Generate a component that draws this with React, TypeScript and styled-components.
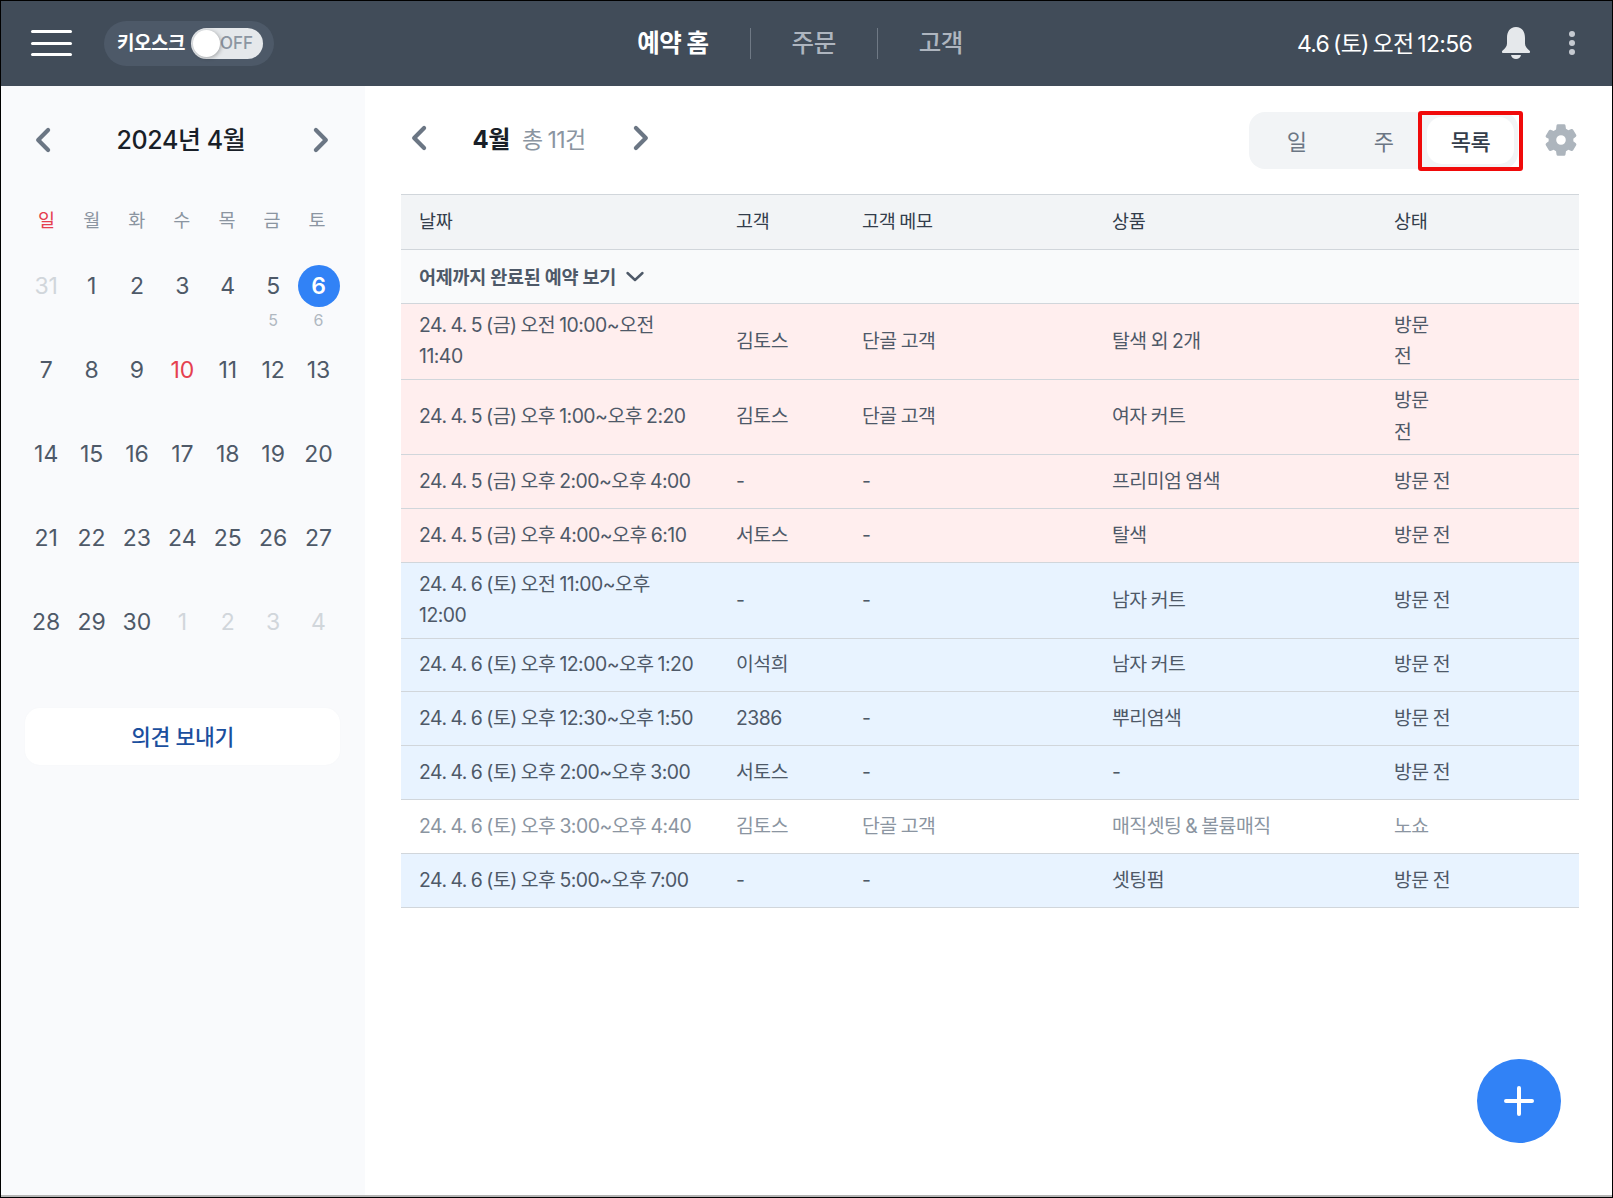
import React from 'react';
import styled, { createGlobalStyle } from 'styled-components';

const Global = createGlobalStyle`
  html, body { margin: 0; padding: 0; background: #fff; }
  body { font-family: Inter, "Noto Sans CJK KR", "Noto Sans", sans-serif; overflow: hidden; }
`;
const Frame = styled.div`
  width: 1613px; height: 1198px; box-sizing: border-box; position: relative; overflow: hidden;
  border-top: 1px solid #000; border-left: 1px solid #000; border-right: 1px solid #000;
  border-bottom: 1px solid #000; display: flex; flex-direction: column; background: #fff;
`;
const BottomEdge = styled.div`height: 2px; flex: none; background: #b5b5b5;`;
const TopBar = styled.header`
  height: 85px; flex: none; background: #414c59; display: grid; grid-template-columns: 1fr auto 1fr; align-items: center;
  padding: 0 36px 1px 30px; box-sizing: border-box; color: #fff;
`;
const BarLeft = styled.div`display: flex; align-items: center; gap: 32px;`;
const Burger = styled.div`
  width: 41px; height: 26px; display: flex; flex-direction: column; justify-content: space-between;
  & > i { display: block; height: 3px; border-radius: 2px; background: #fff; }
`;
const Kiosk = styled.div`
  height: 45px; width: 170px; box-sizing: border-box; border-radius: 23px; background: #4d5968; display: flex; align-items: center; justify-content: space-between; padding: 0 11px 0 13px;
  font-size: 19px; font-weight: 600; letter-spacing: -0.5px;
`;
const KioskLabel = styled.span`padding-bottom: 3px;`;
const Toggle = styled.div`
  width: 72px; height: 31px; border-radius: 16px; background: #e5e8eb; position: relative; color: #8b95a1; font-size: 17px; font-weight: 500; display: flex; align-items: center; justify-content: flex-end; padding-right: 10px; box-sizing: border-box; letter-spacing: 0;
`;
const Knob = styled.span`
  position: absolute; left: 2px; top: 2px; width: 27px; height: 27px; border-radius: 50%; background: #fff; box-shadow: 1px 1px 4px rgba(0,0,0,.3);
`;
const Nav = styled.nav`display: flex; align-items: center; margin-right: 7px;`;
const NavItem = styled.div<{ $active?: boolean }>`
  font-size: 24.5px; font-weight: ${p => p.$active ? 700 : 500}; letter-spacing: -0.5px; color: ${p => p.$active ? '#fff' : '#aeb5bf'};
  padding: 0 41px; height: 31px; line-height: 30px; & + & { border-left: 1px solid #6f7985; }
`;
const BarRight = styled.div`display: flex; align-items: center; justify-content: flex-end; gap: 30px;`;
const Clock = styled.div`font-size: 23px; letter-spacing: -0.7px; word-spacing: -2px; font-weight: 400; padding-bottom: 3px; margin-right: -1px;`;
const DotsBox = styled.div`margin-left: 7px; display: flex;`;
const Body = styled.div`flex: 1; display: flex; min-height: 0;`;
const Side = styled.aside`
  width: 364px; flex: none; background: #f9fafc; padding: 29px 24px 0 24px; box-sizing: border-box; display: flex; flex-direction: column;
`;
const CalHead = styled.div`display: flex; align-items: center; justify-content: space-between; height: 50px; padding: 0 7px 0 5px;`;
const CalTitle = styled.div`font-size: 25px; font-weight: 500; color: #191f28; letter-spacing: -0.4px; margin: 0 2px 4px 0;`;
const Week = styled.div`
  display: grid; grid-template-columns: repeat(7, 45.1px); margin-top: 39px; height: 30px; align-items: center; margin-left: -1px;
`;
const WeekDay = styled.div<{ $red?: boolean }>`
  text-align: center; font-size: 18.5px; color: ${p => p.$red ? '#e5404f' : '#8b95a1'};
`;
const Days = styled.div`
  display: grid; grid-template-columns: repeat(7, 45.4px); grid-auto-rows: 84px; margin-top: 31px; margin-left: -1.5px;
`;
const Day = styled.div`display: flex; flex-direction: column; align-items: center;`;
const DayNum = styled.div<{ $tone?: 'muted' | 'red' | 'sel' }>`
  width: 42px; height: 42px; border-radius: 50%; display: flex; align-items: center; justify-content: center; font-size: 23px;
  color: ${p => p.$tone === 'muted' ? '#d1d6db' : p.$tone === 'red' ? '#e5404f' : p.$tone === 'sel' ? '#fff' : '#4e5968'};
  background: ${p => p.$tone === 'sel' ? '#3182f6' : 'transparent'};
  font-weight: ${p => p.$tone === 'sel' ? 600 : 400};
`;
const DayCount = styled.div`font-size: 16px; color: #b0b8c1; margin-top: 4px; line-height: 19px;`;
const Feedback = styled.button`
  width: 315px; height: 57px; margin-top: 23px; border: 0; border-radius: 15px; background: #fff; color: #1b4f9e; font: 500 21.5px Inter, "Noto Sans CJK KR", sans-serif; letter-spacing: -0.3px; padding: 0 0 3px; box-shadow: 0 0 3px rgba(0,0,0,.02);
`;
const Main = styled.main`flex: 1; min-width: 0; padding: 25px 33px 0 36px; box-sizing: border-box; position: relative;`;
const MainHead = styled.div`display: flex; align-items: center; height: 58px; padding-left: 5px;`;
const MonthGroup = styled.div`display: flex; align-items: center; width: 248px; justify-content: space-between; margin-bottom: 5px;`;
const Month = styled.div`display: flex; align-items: baseline; gap: 12px; margin-left: -2px;`;
const MonthName = styled.span`font-size: 24px; font-weight: 700; color: #191f28; letter-spacing: -0.4px;`;
const MonthTotal = styled.span`font-size: 23px; color: #8b95a1; letter-spacing: -0.6px; word-spacing: -1px;`;
const Right = styled.div`margin-left: auto; display: flex; align-items: center; gap: 25px;`;
const Seg = styled.div`
  height: 57px; box-sizing: border-box; background: #f2f4f6; border-radius: 16px; display: flex; align-items: center; padding: 0 4px;
`;
const SegItem = styled.div`
  width: 87px; height: 47px; display: flex; align-items: center; justify-content: center; font-size: 22px; letter-spacing: -0.5px; color: #6b7684;
`;
const SegActive = styled(SegItem)`
  background: #fff; color: #333d4b; border-radius: 15px; font-weight: 500; position: relative;
  &::after { content: ''; position: absolute; left: -9px; top: -6px; right: -9px; bottom: -7px; border: 4.500px solid #f00a0a; border-radius: 3px; box-sizing: border-box; pointer-events: none; }
`;
const TableWrap = styled.div`margin-top: 25px;`;
const Row = styled.div<{ $tone?: 'red' | 'blue' | 'head' | 'fold' | 'off'; $h: number }>`
  display: grid; grid-template-columns: 317px 126px 250px 282px 1fr; align-items: center; height: ${p => p.$h}px; box-sizing: border-box;
  border-bottom: 1px solid #d1d6db;
  background: ${p => ({ red: '#ffeeee', blue: '#e8f3ff', head: '#f2f4f6', fold: '#f9fafb', off: '#fff' } as Record<string, string>)[p.$tone || 'off']};
  color: ${p => p.$tone === 'off' ? '#8b95a1' : p.$tone === 'head' ? '#333d4b' : '#4e5968'};
  ${p => p.$tone === 'head' ? 'border-top: 1px solid #d1d6db;' : ''}
`;
const Cell = styled.div`padding: 0 19px 0 18px; font-size: 19.4px; line-height: 31.5px; letter-spacing: -0.5px; word-spacing: -1px;`;
const HeadCell = styled(Cell)`font-size: 18.5px; letter-spacing: -0.3px; word-spacing: -1px;`;
const Fold = styled.div`
  grid-column: 1 / -1; padding: 0 0 1px 18px; font-size: 18.5px; font-weight: 600; color: #4e5968; display: flex; align-items: center; gap: 7px; letter-spacing: -0.3px;
`;
const Fab = styled.div`
  position: absolute; right: 51px; bottom: 52px; width: 84px; height: 84px; border-radius: 50%; background: #3182f6; display: flex; align-items: center; justify-content: center;
`;

const Chev = ({ dir, size = 28, w = 3.6, color = '#6b7684' }: { dir: 'l' | 'r' | 'd'; size?: number; w?: number; color?: string }) => (
  <svg width={size} height={size} viewBox="0 0 24 24" fill="none" stroke={color} strokeWidth={w} strokeLinecap="round" strokeLinejoin="round">
    <path d={dir === 'l' ? 'M15.5 3.5 7 12l8.5 8.5' : dir === 'r' ? 'M8.5 3.5 17 12l-8.5 8.5' : 'M4.500 9l7.500 7 7.500-7'} />
  </svg>
);
const Bell = () => (
  <svg width="30" height="34" viewBox="0 0 30 34" fill="#e5e8eb">
    <path d="M15 1C8.6 1 6 6 6 12v5.5c0 2.600-1.800 4.800-4.600 7.200-.9.8-.4 2.300.8 2.300h25.600c1.200 0 1.700-1.500.8-2.300C25.800 22.300 24 20.100 24 17.500V12C24 6 21.400 1 15 1z" />
    <path d="M10 29h10c-.4 2.400-2.600 4-5 4s-4.600-1.600-5-4z" />
  </svg>
);
const Dots = () => (
  <svg width="8" height="26" viewBox="0 0 8 26" fill="#c5cad1"><circle cx="4" cy="4" r="3" /><circle cx="4" cy="13" r="3" /><circle cx="4" cy="22" r="3" /></svg>
);
const Gear = () => (
  <svg width="36" height="36" viewBox="0 0 24 24" fill="#adb5bd" fillRule="evenodd">
    <path d="M10 1.500h4a1 1 0 0 1 1 .9l.3 2.100c.6.3 1.100.6 1.600 1l2-.8a1 1 0 0 1 1.200.4l2 3.400a1 1 0 0 1-.2 1.300l-1.700 1.300a7 7 0 0 1 0 1.800l1.700 1.300a1 1 0 0 1 .2 1.300l-2 3.400a1 1 0 0 1-1.200.4l-2-.8c-.5.4-1 .7-1.600 1l-.3 2.100a1 1 0 0 1-1 .9h-4a1 1 0 0 1-1-.9l-.3-2.100c-.6-.3-1.100-.6-1.600-1l-2 .8a1 1 0 0 1-1.200-.4l-2-3.400a1 1 0 0 1 .2-1.300l1.700-1.300a7 7 0 0 1 0-1.800L2.100 10.300a1 1 0 0 1-.2-1.300l2-3.400a1 1 0 0 1 1.200-.4l2 .8c.5-.4 1-.7 1.600-1L9 2.400a1 1 0 0 1 1-.9zM12 8.800a3.200 3.200 0 1 0 0 6.400 3.200 3.200 0 0 0 0-6.400z" />
  </svg>
);

const weekDays = ['일', '월', '화', '수', '목', '금', '토'];
type D = { n: number; tone?: 'muted' | 'red' | 'sel'; c?: number };
const days: D[] = [
  { n: 31, tone: 'muted' }, { n: 1 }, { n: 2 }, { n: 3 }, { n: 4 }, { n: 5, c: 5 }, { n: 6, tone: 'sel', c: 6 },
  { n: 7 }, { n: 8 }, { n: 9 }, { n: 10, tone: 'red' }, { n: 11 }, { n: 12 }, { n: 13 },
  { n: 14 }, { n: 15 }, { n: 16 }, { n: 17 }, { n: 18 }, { n: 19 }, { n: 20 },
  { n: 21 }, { n: 22 }, { n: 23 }, { n: 24 }, { n: 25 }, { n: 26 }, { n: 27 },
  { n: 28 }, { n: 29 }, { n: 30 }, { n: 1, tone: 'muted' }, { n: 2, tone: 'muted' }, { n: 3, tone: 'muted' }, { n: 4, tone: 'muted' },
];
type R = { tone: 'red' | 'blue' | 'off'; h: number; c: React.ReactNode[] };
const rows: R[] = [
  { tone: 'red', h: 75.6, c: ['24. 4. 5 (금) 오전 10:00~오전 11:40', '김토스', '단골 고객', '탈색 외 2개', <>방문<br />전</>] },
  { tone: 'red', h: 75.6, c: ['24. 4. 5 (금) 오후 1:00~오후 2:20', '김토스', '단골 고객', '여자 커트', <>방문<br />전</>] },
  { tone: 'red', h: 53.9, c: ['24. 4. 5 (금) 오후 2:00~오후 4:00', '-', '-', '프리미엄 염색', '방문 전'] },
  { tone: 'red', h: 53.9, c: ['24. 4. 5 (금) 오후 4:00~오후 6:10', '서토스', '-', '탈색', '방문 전'] },
  { tone: 'blue', h: 75.6, c: ['24. 4. 6 (토) 오전 11:00~오후 12:00', '-', '-', '남자 커트', '방문 전'] },
  { tone: 'blue', h: 53.9, c: ['24. 4. 6 (토) 오후 12:00~오후 1:20', '이석희', '', '남자 커트', '방문 전'] },
  { tone: 'blue', h: 53.9, c: ['24. 4. 6 (토) 오후 12:30~오후 1:50', '2386', '-', '뿌리염색', '방문 전'] },
  { tone: 'blue', h: 53.9, c: ['24. 4. 6 (토) 오후 2:00~오후 3:00', '서토스', '-', '-', '방문 전'] },
  { tone: 'off', h: 53.9, c: ['24. 4. 6 (토) 오후 3:00~오후 4:40', '김토스', '단골 고객', '매직셋팅 & 볼륨매직', '노쇼'] },
  { tone: 'blue', h: 53.9, c: ['24. 4. 6 (토) 오후 5:00~오후 7:00', '-', '-', '셋팅펌', '방문 전'] },
];

export default function App() {
  return (
    <Frame>
      <Global />
      <TopBar>
        <BarLeft>
          <Burger><i /><i /><i /></Burger>
          <Kiosk><KioskLabel>키오스크</KioskLabel><Toggle><Knob />OFF</Toggle></Kiosk>
        </BarLeft>
        <Nav>
          <NavItem $active>예약 홈</NavItem>
          <NavItem>주문</NavItem>
          <NavItem>고객</NavItem>
        </Nav>
        <BarRight>
          <Clock>4.6 (토) 오전 12:56</Clock>
          <Bell />
          <DotsBox><Dots /></DotsBox>
        </BarRight>
      </TopBar>
      <Body>
        <Side>
          <CalHead>
            <Chev dir="l" />
            <CalTitle>2024년 4월</CalTitle>
            <Chev dir="r" />
          </CalHead>
          <Week>{weekDays.map((d, i) => <WeekDay key={d} $red={i === 0}>{d}</WeekDay>)}</Week>
          <Days>
            {days.map((d, i) => (
              <Day key={i}>
                <DayNum $tone={d.tone}>{d.n}</DayNum>
                {d.c ? <DayCount>{d.c}</DayCount> : null}
              </Day>
            ))}
          </Days>
          <Feedback>의견 보내기</Feedback>
        </Side>
        <Main>
          <MainHead>
            <MonthGroup>
              <Chev dir="l" />
              <Month><MonthName>4월</MonthName><MonthTotal>총 11건</MonthTotal></Month>
              <Chev dir="r" />
            </MonthGroup>
            <Right>
              <Seg>
                <SegItem>일</SegItem>
                <SegItem>주</SegItem>
                <SegActive>목록</SegActive>
              </Seg>
              <Gear />
            </Right>
          </MainHead>
          <TableWrap>
            <Row $tone="head" $h={56}>
              {['날짜', '고객', '고객 메모', '상품', '상태'].map(h => <HeadCell key={h}>{h}</HeadCell>)}
            </Row>
            <Row $tone="fold" $h={54}>
              <Fold>어제까지 완료된 예약 보기<Chev dir="d" size={24} w={2.4} color="#4e5968" /></Fold>
            </Row>
            {rows.map((r, i) => (
              <Row key={i} $tone={r.tone} $h={r.h}>
                {r.c.map((c, j) => <Cell key={j}>{c}</Cell>)}
              </Row>
            ))}
          </TableWrap>
          <Fab>
            <svg width="32" height="32" viewBox="0 0 32 32" stroke="#fff" strokeWidth="4" strokeLinecap="round"><path d="M16 3v26M3 16h26" /></svg>
          </Fab>
        </Main>
      </Body>
      <BottomEdge />
    </Frame>
  );
}
